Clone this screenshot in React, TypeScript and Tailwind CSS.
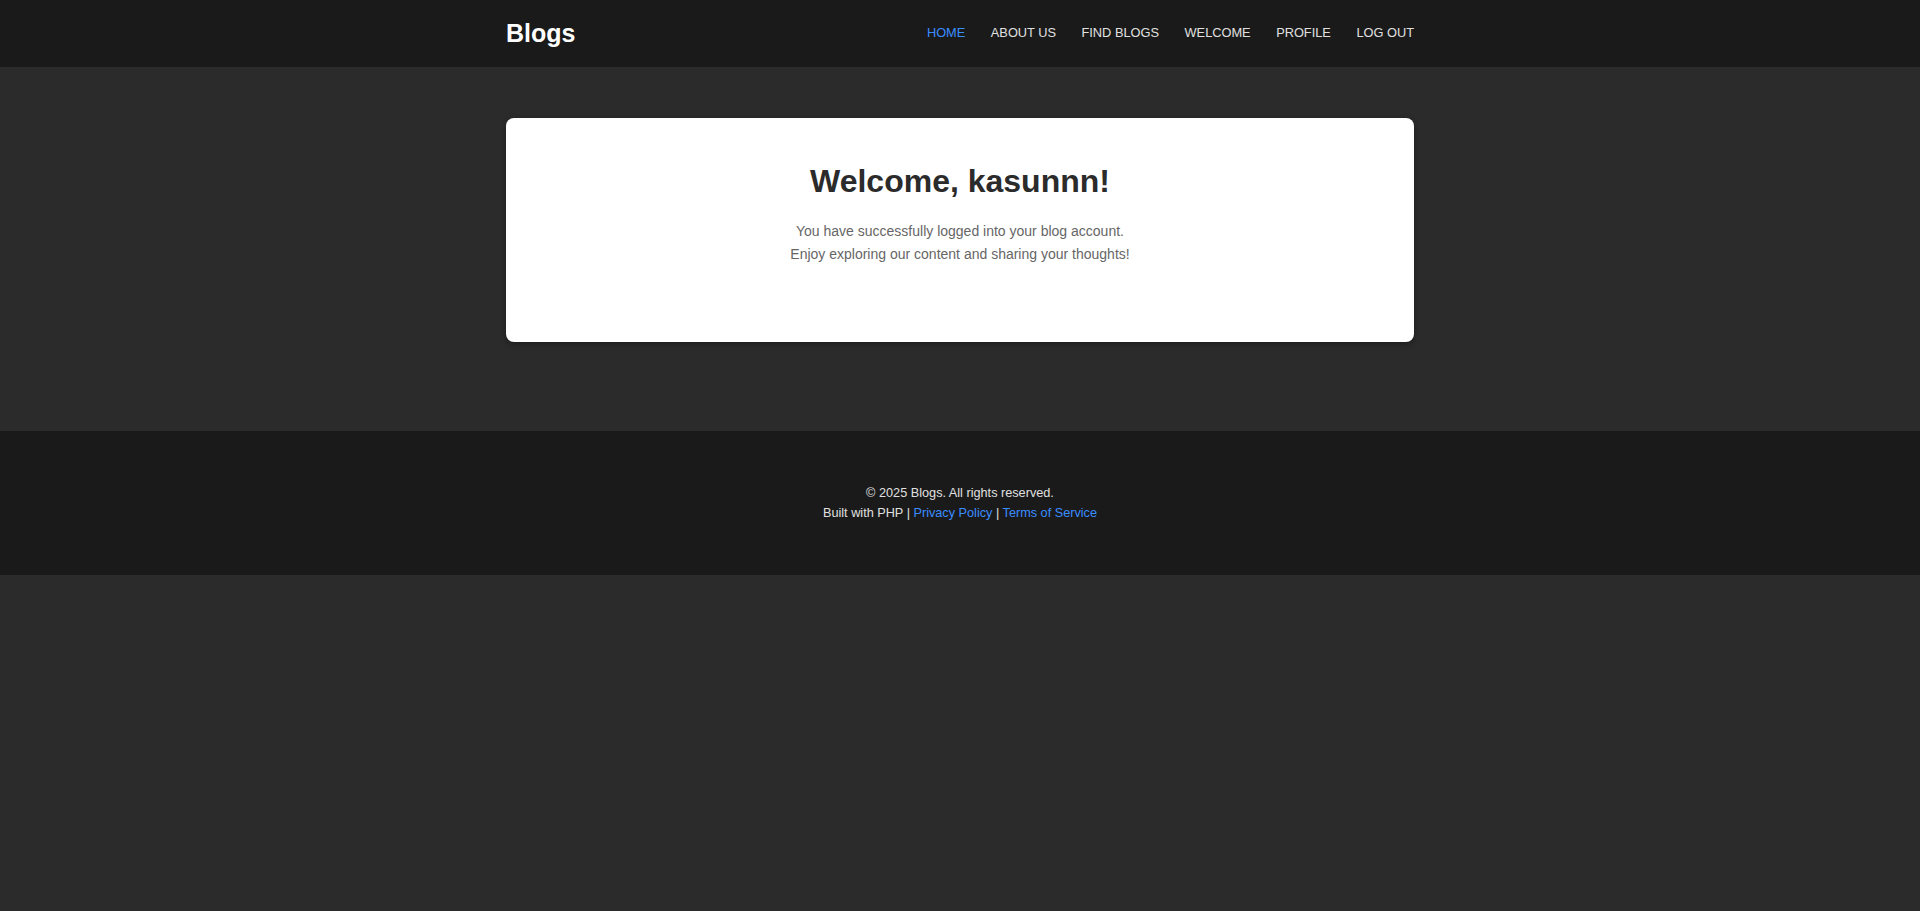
import React from 'react';

const navLinks = ['HOME', 'ABOUT US', 'FIND BLOGS', 'WELCOME', 'PROFILE', 'LOG OUT'];

// the active page in the nav
const activeLink = 'HOME';

const App = () => {
    return (
        <div className="min-h-screen bg-[#2b2b2b] font-['Liberation_Sans',Arial,sans-serif]">
            {/* header */}
            <header className="h-[67px] bg-[#1a1a1a]">
                <div className="mx-auto flex h-full w-[908px] items-center justify-between">
                    <div className="text-[25px] font-bold leading-none text-white pb-[1px]">Blogs</div>
                    <nav className="flex items-center gap-[25.5px]">
                        {navLinks.map((link) => (
                            <a
                                key={link}
                                href="#"
                                className={link === activeLink
                                    ? 'text-[12.8px] leading-none text-[#3a8dff]'
                                    : 'text-[12.8px] leading-none text-[#e0e0e0]'}
                            >
                                {link}
                            </a>
                        ))}
                    </nav>
                </div>
            </header>

            {/* main */}
            <main className="pt-[51px] pb-[89px]">
                <div className="mx-auto w-[908px] rounded-lg bg-white pt-[44px] pb-[76px] text-center shadow-[0_2px_6px_rgba(0,0,0,0.35)]">
                    <h1 className="text-[32px] font-bold leading-[38px] text-[#2b2b2b]">Welcome, kasunnn!</h1>
                    <p className="mt-[20px] text-[14px] leading-[23px] text-[#666666]">
                        You have successfully logged into your blog account.
                        <br />
                        Enjoy exploring our content and sharing your thoughts!
                    </p>
                </div>
            </main>

            {/* footer */}
            <footer className="h-[144px] bg-[#1a1a1a] pt-[52px] text-center text-[12.7px] leading-[20px] text-[#e0e0e0]">
                <p>&copy; 2025 Blogs. All rights reserved.</p>
                <p>
                    Built with PHP | <a href="#" className="text-[#3a8dff]">Privacy Policy</a> | <a href="#" className="text-[#3a8dff]">Terms of Service</a>
                </p>
            </footer>
        </div>
    );
};

export default App;
